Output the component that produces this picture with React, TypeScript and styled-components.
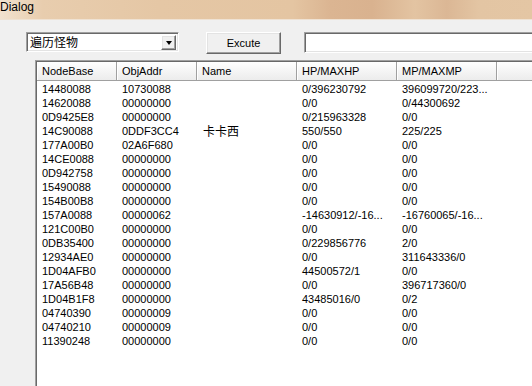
import React from "react";
import styled, { createGlobalStyle } from "styled-components";

const Global = createGlobalStyle`
  html, body { margin: 0; padding: 0; background: #f0f0f0; }
  * { box-sizing: border-box; }
`;

const Window = styled.div`
  width: 532px;
  height: 386px;
  overflow: hidden;
  background: #f0f0f0;
  display: flex;
  flex-direction: column;
  font-family: "Liberation Sans", Arial, sans-serif;
  font-size: 11px;
  color: #000;
`;

const TitleBar = styled.div`
  height: 20px;
  flex: none;
  padding-left: 0;
  font-size: 12px;
  line-height: 15px;
  color: #000;
  background: linear-gradient(
    to right,
    #f2e2cf 0%,
    #e8cdae 8%,
    #e5c7a5 30%,
    #e4c5a2 55%,
    #dbb592 62%,
    #d9b28f 70%,
    #e3c4a2 78%,
    #dbb795 84%,
    #e3c5a3 90%,
    #e4c6a4 100%
  );
  border-bottom: 1px solid #efe2d3;
`;

const Toolbar = styled.div`
  display: flex;
  align-items: flex-start;
  padding-left: 26px;
  margin-top: 12px;
  height: 22px;
  flex: none;
  overflow: hidden;
`;

const Sunken = styled.div`
  flex: none;
  background: #fff;
  border-top: 1px solid #a0a0a0;
  border-left: 1px solid #a0a0a0;
  border-bottom: 1px solid #ffffff;
  border-right: 1px solid #ffffff;
  box-shadow: inset 1px 1px 0 #696969, inset -1px -1px 0 #e3e3e3;
`;

const Combo = styled(Sunken)`
  width: 153px;
  height: 20px;
  display: flex;
  align-items: center;
  padding: 0 2px 0 3px;
`;

const ComboText = styled.span`
  flex: 1;
  font-family: "Noto Sans CJK SC", sans-serif;
  font-size: 12px;
  line-height: 16px;
`;

const Raised = styled.div`
  flex: none;
  background: #f0f0f0;
  border-top: 1px solid #ffffff;
  border-left: 1px solid #ffffff;
  border-right: 1px solid #696969;
  border-bottom: 1px solid #696969;
  box-shadow: inset -1px -1px 0 #a0a0a0, inset 1px 1px 0 #e3e3e3;
`;

const DropButton = styled(Raised)`
  width: 15px;
  height: 15px;
  display: flex;
  align-items: center;
  justify-content: center;
`;

const Arrow = styled.div`
  width: 0;
  height: 0;
  border-left: 3.5px solid transparent;
  border-right: 3.5px solid transparent;
  border-top: 4px solid #000;
  margin-top: 1px;
`;

const Button = styled(Raised)`
  width: 75px;
  height: 22px;
  margin-left: 27px;
  display: flex;
  align-items: center;
  justify-content: center;
  font-size: 11px;
  padding-bottom: 1px;
`;

const Edit = styled(Sunken)`
  width: 260px;
  height: 21px;
  margin-left: 23px;
`;

const ListView = styled.div`
  margin-top: 6px;
  margin-left: 35px;
  width: 540px;
  flex: 1;
  background: #fff;
  border-top: 1px solid #a0a0a0;
  border-left: 1px solid #a0a0a0;
  box-shadow: inset 1px 1px 0 #696969;
  padding: 1px 0 0 1px;
  overflow: hidden;
`;

const Row = styled.div`
  display: grid;
  grid-template-columns: 80px 80px 100px 100px 100px 100px;
`;

const HeaderCell = styled.div`
  height: 19px;
  line-height: 18px;
  padding-left: 5px;
  background: linear-gradient(to bottom, #ffffff, #f3f3f3 60%, #ececec);
  border-right: 1px solid #a0a0a0;
  border-bottom: 1px solid #a0a0a0;
  box-shadow: inset 1px 0 0 #ffffff;
  white-space: nowrap;
  overflow: hidden;
`;

const Cell = styled.div<{ $cjk?: boolean }>`
  height: 14px;
  line-height: 14px;
  padding-left: ${(p) => (p.$cjk ? "6px" : "5px")};
  white-space: nowrap;
  overflow: ${(p) => (p.$cjk ? "visible" : "hidden")};
  font-family: ${(p) =>
    p.$cjk
      ? `"Noto Sans CJK SC", sans-serif`
      : `"Liberation Sans", Arial, sans-serif`};
  font-size: ${(p) => (p.$cjk ? "12px" : "11px")};
  color: #000;
`;

const Body = styled.div`
  padding-top: 1px;
`;

const headers = ["NodeBase", "ObjAddr", "Name", "HP/MAXHP", "MP/MAXMP", ""];

const rows: string[][] = [
  ["14480088", "10730088", "", "0/396230792", "396099720/223..."],
  ["14620088", "00000000", "", "0/0", "0/44300692"],
  ["0D9425E8", "00000000", "", "0/215963328", "0/0"],
  ["14C90088", "0DDF3CC4", "卡卡西", "550/550", "225/225"],
  ["177A00B0", "02A6F680", "", "0/0", "0/0"],
  ["14CE0088", "00000000", "", "0/0", "0/0"],
  ["0D942758", "00000000", "", "0/0", "0/0"],
  ["15490088", "00000000", "", "0/0", "0/0"],
  ["154B00B8", "00000000", "", "0/0", "0/0"],
  ["157A0088", "00000062", "", "-14630912/-16...", "-16760065/-16..."],
  ["121C00B0", "00000000", "", "0/0", "0/0"],
  ["0DB35400", "00000000", "", "0/229856776", "2/0"],
  ["12934AE0", "00000000", "", "0/0", "311643336/0"],
  ["1D04AFB0", "00000000", "", "44500572/1", "0/0"],
  ["17A56B48", "00000000", "", "0/0", "396717360/0"],
  ["1D04B1F8", "00000000", "", "43485016/0", "0/2"],
  ["04740390", "00000009", "", "0/0", "0/0"],
  ["04740210", "00000009", "", "0/0", "0/0"],
  ["11390248", "00000000", "", "0/0", "0/0"],
];

export default function App() {
  return (
    <>
      <Global />
      <Window>
        <TitleBar>Dialog</TitleBar>
        <Toolbar>
          <Combo>
            <ComboText>遍历怪物</ComboText>
            <DropButton>
              <Arrow />
            </DropButton>
          </Combo>
          <Button>Excute</Button>
          <Edit />
        </Toolbar>
        <ListView>
          <Row>
            {headers.map((h, i) => (
              <HeaderCell key={i}>{h}</HeaderCell>
            ))}
          </Row>
          <Body>
            {rows.map((r, i) => (
              <Row key={i}>
                {r.map((c, j) => (
                  <Cell key={j} $cjk={j === 2}>
                    {c}
                  </Cell>
                ))}
                <Cell />
              </Row>
            ))}
          </Body>
        </ListView>
      </Window>
    </>
  );
}
